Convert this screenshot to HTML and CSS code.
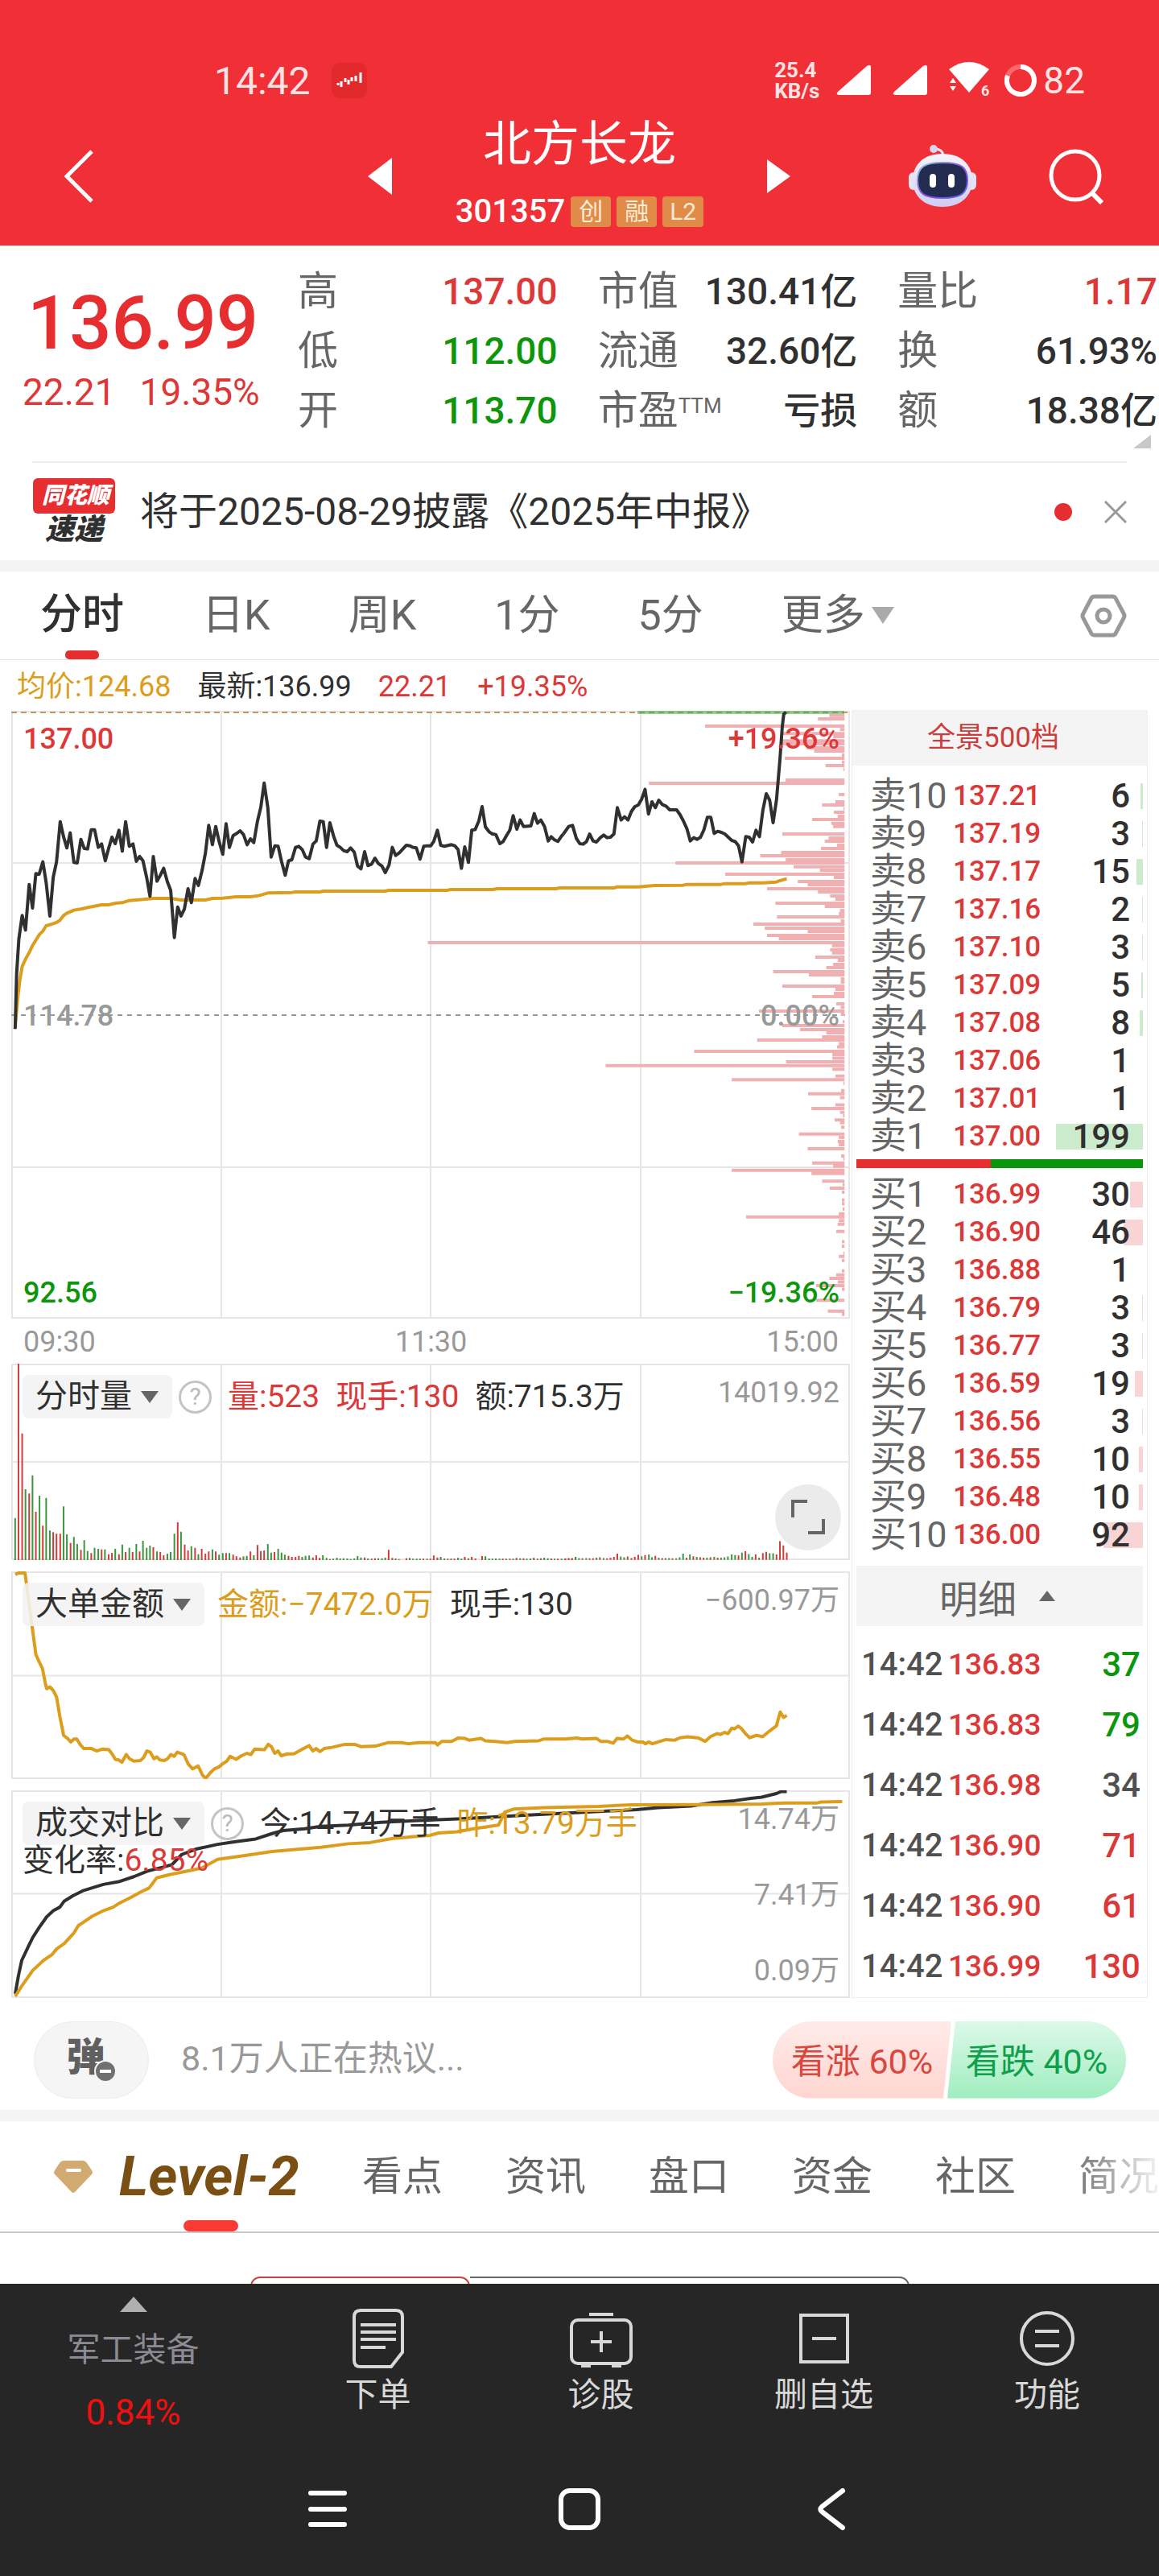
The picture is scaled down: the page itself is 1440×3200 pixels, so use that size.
FILE: index.html
```html
<!DOCTYPE html>
<html lang="zh-CN">
<head>
  <meta charset="utf-8">
  <meta name="viewport" content="width=device-width, initial-scale=1">
  <title>北方长龙 301357</title>
  <link rel="stylesheet" href="styles.css">
</head>
<body>

  <header class="top">
    <div class="status">
      <span class="clock">14:42</span>
      <svg class="app-icon" width="44" height="44" viewBox="0 0 44 44">
        <rect width="44" height="44" rx="10" fill="#e22a2d"/>
        <path d="M8 28v-3M12 30v-7M17 24v-5M21 27v-6M25 23v-5M30 23v-7M36 25V12" stroke="#fff" stroke-width="3"/>
      </svg>
      <span class="speed"><span>25.4</span><span>KB/s</span></span>
      <svg class="signal" width="46" height="40" viewBox="0 0 46 40"><path d="M3 34 39 2q5-3 5 2v31q0 3-3 3H4q-4-1-1-4z" fill="#fff"/></svg>
      <svg class="signal" width="46" height="40" viewBox="0 0 46 40"><path d="M3 34 39 2q5-3 5 2v31q0 3-3 3H4q-4-1-1-4z" fill="#fff"/></svg>
      <svg class="wifi" width="54" height="52" viewBox="0 -2 54 52">
        <path d="M1 10Q26-8 51 10L26 39z" fill="#fff"/>
        <path d="M6 21l4 6H2zM6 37l4-6H2z" fill="#fff"/>
        <text x="41" y="43" class="wifi-six">6</text>
      </svg>
      <svg class="ring" width="40" height="40" viewBox="0 0 40 40">
        <circle cx="20" cy="20" r="17" fill="none" stroke="#f9686c" stroke-width="6"/>
        <path d="M20 3A17 17 0 1 1 4 14" fill="none" stroke="#fff" stroke-width="6"/>
      </svg>
      <span class="battery">82</span>
    </div>

    <div class="titlebar">
      <div class="side left">
        <button class="icon-btn" aria-label="返回">
          <svg width="36" height="66" viewBox="0 0 36 66"><path d="M34 2 3 33l31 31" fill="none" stroke="#fff" stroke-width="5"/></svg>
        </button>
        <button class="icon-btn" aria-label="上一只">
          <svg width="30" height="46" viewBox="0 0 30 46"><path d="M30 0v46L0 23z" fill="#fff"/></svg>
        </button>
      </div>
      <div class="stock">
        <h1>北方长龙</h1>
        <div class="code">301357 <span class="tag">创</span><span class="tag">融</span><span class="tag">L2</span></div>
      </div>
      <div class="side right">
        <button class="icon-btn" aria-label="下一只">
          <svg width="30" height="42" viewBox="0 0 30 42"><path d="M0 0v42l29-21z" fill="#fff"/></svg>
        </button>
        <button class="icon-btn robot" aria-label="助手">
          <svg width="86" height="78" viewBox="0 0 86 78">
            <defs>
              <linearGradient id="shell" x1="0" y1="0" x2="0" y2="1"><stop offset="0" stop-color="#f6f4fb"/><stop offset="1" stop-color="#cfcdf3"/></linearGradient>
              <linearGradient id="rim" x1="0" y1="0" x2="1" y2="1"><stop offset="0" stop-color="#8ad3e0"/><stop offset=".5" stop-color="#8a4fe0"/><stop offset="1" stop-color="#5b62e6"/></linearGradient>
            </defs>
            <path d="M31 5q13-1 13 10" fill="none" stroke="#ece6f6" stroke-width="3"/>
            <circle cx="32" cy="5" r="5" fill="#ddd5ee"/>
            <rect x="1" y="34" width="12" height="22" rx="6" fill="#e6e3f7"/>
            <rect x="73" y="34" width="12" height="22" rx="6" fill="#e6e3f7"/>
            <path d="M43 11c24 0 37 14 37 33 0 20-15 33-37 33S6 64 6 44c0-19 13-33 37-33z" fill="url(#shell)"/>
            <path d="M43 22c22 0 31 5 31 22s-9 22-31 22-31-5-31-22 9-22 31-22z" fill="#222c50" stroke="url(#rim)" stroke-width="2"/>
            <rect x="27" y="36" width="8" height="17" rx="4" fill="#fff"/>
            <rect x="50" y="36" width="8" height="17" rx="4" fill="#fff"/>
          </svg>
        </button>
        <button class="icon-btn search" aria-label="搜索">
          <svg width="70" height="70" viewBox="0 0 70 70" fill="none" stroke="#fff" stroke-width="5"><circle cx="34" cy="34" r="30"/><path d="M56 57l11 11" stroke-width="6"/></svg>
        </button>
      </div>
    </div>
  </header>

  <section class="quote">
    <div class="last">
      <strong class="price">136.99</strong>
      <span class="change"><span>22.21</span><span>19.35%</span></span>
    </div>
    <dl class="stats">
      <div><dt>高</dt><dd class="up">137.00</dd></div>
      <div><dt>市值</dt><dd>130.41亿</dd></div>
      <div><dt>量比</dt><dd class="up">1.17</dd></div>
      <div><dt>低</dt><dd class="down">112.00</dd></div>
      <div><dt>流通</dt><dd>32.60亿</dd></div>
      <div><dt>换</dt><dd>61.93%</dd></div>
      <div><dt>开</dt><dd class="down">113.70</dd></div>
      <div><dt>市盈<sup>TTM</sup></dt><dd>亏损</dd></div>
      <div><dt>额</dt><dd>18.38亿</dd></div>
    </dl>
    <i class="corner"></i>
  </section>

  <section class="news">
    <span class="news-logo"><b>同花顺</b><em>速递</em></span>
    <a class="news-link" href="#">将于2025-08-29披露《2025年中报》</a>
    <i class="dot"></i>
    <button class="icon-btn" aria-label="关闭">
      <svg width="28" height="28" viewBox="0 0 28 28"><path d="M1 1l26 26M27 1 1 27" stroke="#999" stroke-width="3"/></svg>
    </button>
  </section>

  <nav class="periods">
    <button class="period active">分时</button>
    <button class="period">日K</button>
    <button class="period">周K</button>
    <button class="period">1分</button>
    <button class="period">5分</button>
    <button class="period">更多<i class="tri"></i></button>
    <button class="icon-btn settings" aria-label="设置">
      <svg width="58" height="54" viewBox="0 0 58 54" fill="none" stroke="#999" stroke-width="5"><path d="M18 3h22q3 0 4 2l10 19q2 3 0 6L44 49q-1 2-4 2H18q-3 0-4-2L4 30q-2-3 0-6L14 5q1-2 4-2z"/><circle cx="29" cy="27" r="8"/></svg>
    </button>
  </nav>

  <p class="legend">
    <span class="avg">均价:124.68</span>
    <span>最新:136.99</span>
    <span class="up">22.21</span>
    <span class="up">+19.35%</span>
  </p>

  <main class="trade">
    <div class="charts">

      <!-- intraday price -->
      <div class="panel">
        <svg class="plot plot-price" viewBox="0 0 1042 756" preserveAspectRatio="none">
          <path class="grid" d="M1 2H1041V755H1zM261 2V755M521 2V755M782 2V755M1 190H1041M1 568H1041"/>
          <path class="mid" d="M0 379H1036"/>
          <path class="limit" d="M0 3H1042"/>
          <path class="limit-vol" d="M778 3H1035"/>
          <g transform="translate(686 -22) scale(.472 .3333)">
            <path class="profile" d="M740 86H700M740 99H670M740 126H373M740 139H728M740 154H575M740 165H710M740 181H575M740 192H572M740 207H640M740 219H660M740 234H733M740 246H583M740 260H733M740 273H690M740 287H737M740 327H585M740 339H225M740 381H725M740 408H716M740 420H681M740 434H737M740 447H712M740 462H722M740 474H655M740 488H705M740 500H710M740 528H576M740 543H698M740 555H688M740 570H720M740 582H678M740 597H573M740 609H518M740 624H585M740 636H295M740 650H606M740 663H675M740 678H426M740 690H712M740 705H617M740 717H643M740 732H536M740 744H670M740 759H702M740 771H716M740 786H558M740 798H688M740 813H728M740 825H725M740 837H562M740 852H730M740 864H500M740 879H530M740 891H643M740 906H536M740 918H567M740 933H-357M740 944H707M740 959H702M740 971H707M740 987H663M740 999H722M740 1014H710M740 1026H692M740 1041H552M740 1053H646M740 1068H730M740 1080H730M740 1095H576M740 1107H716M740 1122H712M740 1134H655M740 1161H718M740 1174H730M740 1188H515M740 1200H730M740 1228H735M740 1242H576M740 1257H623M740 1269H692M740 1284H681M740 1296H510"/>
          </g>
          <g transform="translate(686 378) scale(.472 .4464)">
            <path class="profile" d="M740 82H725M740 91H720M740 103H344M740 112H708M740 122H708M740 132H586M740 143H111M740 153H708M740 172H716M740 182H443M740 192H737M740 212H731M740 221H644M740 232H728M740 252H716M740 262H653M740 273H728M740 282H736M740 294H714M740 302H728M740 314H731M740 333H620M740 343H725M740 354H722M740 363H725M740 374H643M740 394H731M740 403H737M740 414H655M740 423H710M740 434H443M740 443H653M740 464H681M740 474H735M740 484H701M740 495H733M740 517H733M740 527H733M740 542H735M740 555H725M740 564H481M740 574H725M740 584H722M740 604H718M740 633H733M740 645H733M740 665H737M740 674H725M740 685H733M740 714H733M740 725H718M740 735H700M740 745H722M740 755H665M740 765H733M740 796H665M740 826H696M740 835H733"/>
          </g>
          <g transform="translate(-14 -22) scale(.459 .3333)">
            <polyline class="line gold" points="41,1250 48,1140 54,1070 60,1022 70,992 79,970 88,944 98,922 107,902 116,890 125,870 144,862 153,858 162,850 172,832 180,824 200,812 219,808 238,802 275,792 294,792 313,786 331,784 350,776 387,772 415,768 462,768 490,774 556,774 575,768 603,767 640,762 678,762 700,758 725,748 790,746 800,744 866,744 875,741 1043,741 1052,738 1210,738 1220,735 1335,735 1345,732 1505,732 1515,729 1570,729"/>
            <polyline class="line dark" points="41,1255 45,1050 51,920 60,832 69,886 79,716 88,804 97,676 106,678 116,632 125,710 135,834 144,690 153,632 163,482 172,538 181,580 190,524 200,634 209,636 219,548 228,582 237,584 247,512 256,512 266,578 275,565 285,628 294,582 303,540 312,564 322,514 331,592 340,482 350,574 360,565 369,630 378,612 387,628 397,690 406,760 415,612 425,704 434,682 443,656 453,706 462,738 472,914 481,800 490,834 499,808 509,732 518,784 528,694 537,720 547,664 556,600 565,496 575,568 584,500 593,556 603,604 612,490 621,578 631,534 641,526 650,516 659,530 669,568 678,546 687,560 697,480 706,428 715,338 725,430 734,614 744,572 753,574 762,630 772,682 781,628 790,624 800,578 809,574 818,586 827,614 837,620 847,566 856,554 866,480 875,482 884,578 893,486 903,536 912,570 921,578 930,590 940,594 949,580 959,596 968,648 977,658 987,594 996,646 1006,640 1015,618 1024,638 1034,648 1043,672 1053,644 1062,578 1071,608 1081,598 1100,570 1110,572 1118,578 1127,580 1137,622 1147,574 1156,572 1166,572 1174,556 1184,514 1193,570 1203,574 1222,568 1231,572 1240,586 1249,656 1258,576 1268,634 1277,514 1286,512 1296,480 1305,426 1314,502 1324,520 1333,528 1342,530 1353,564 1362,556 1371,534 1380,514 1389,460 1399,510 1408,476 1417,500 1437,498 1446,452 1455,488 1464,476 1474,500 1484,554 1492,538 1501,550 1510,556 1520,536 1525,528"/>
          </g>
          <g transform="translate(686 -22) scale(.472 .3333)">
            <polyline class="line gold" points="40,729 133,729 142,725 197,725 240,720 315,719 325,716 415,716 425,713 480,713 490,710 525,710 560,707 570,702 588,695"/>
            <polyline class="line dark" points="0,528 14,500 24,496 34,544 43,564 52,566 61,556 69,528 78,554 87,558 97,542 106,532 115,542 124,540 133,528 142,430 152,476 161,464 170,476 179,444 188,426 197,420 206,398 215,362 224,454 233,408 242,430 251,402 260,418 270,424 280,438 298,438 307,456 316,480 325,508 334,554 343,542 352,548 361,540 370,512 379,466 388,466 397,526 406,518 416,522 425,528 434,540 443,552 452,556 461,572 470,632 480,538 489,540 498,558 507,514 516,538 525,440 534,378 543,402 552,486 561,400 570,250 576,130 580,82 586,74"/>
          </g>
        </svg>
        <div class="axis axis-price">
          <div><span class="up">137.00</span><span class="up">+19.36%</span></div>
          <div class="zero"><span>114.78</span><span>0.00%</span></div>
          <div><span class="down">92.56</span><span class="down">−19.36%</span></div>
        </div>
      </div>
      <div class="hours"><span>09:30</span><span>11:30</span><span>15:00</span></div>

      <!-- volume per minute -->
      <div class="panel">
        <svg class="plot plot-volume" viewBox="0 0 1042 244" preserveAspectRatio="none">
          <path class="grid" d="M1 1H1041V243H1zM261 1V243M521 1V243M782 1V243M1 122H1041"/>
          <g transform="translate(-14 -134) scale(.459 .3333)">
            <path class="bar red" d="M50 1134V399M60 1134V662M79 1134V886M97 1134V954M116 1134V1006M144 1134V1030M153 1134V1036M163 1134V1036M191 1134V1070M219 1134V1096M247 1134V1108M275 1134V1094M294 1134V1112M303 1134V1107M322 1134V1112M340 1134V1104M359 1134V1104M378 1134V1102M415 1134V1086M434 1134V1104M443 1134V1116M481 1134V993M500 1134V1076M509 1134V1098M528 1134V1088M546 1134V1092M556 1134V1110M565 1134V1102M584 1134V1102M612 1134V1108M631 1134V1114M640 1134V1120M650 1134V1124M678 1134V1102M697 1134V1078M706 1134V1100M715 1134V1098M743 1134V1104M781 1134V1118M790 1134V1122M800 1134V1122M809 1134V1118M847 1134V1124M856 1134V1116M865 1134V1126M893 1134V1130M987 1134V1124M1006 1134V1129M1015 1134V1127M1052 1134V1096M1062 1134V1126M1080 1134V1130M1100 1134V1127M1146 1134V1129M1165 1134V1129M1174 1134V1117M1184 1134V1124M1212 1134V1129M1230 1134V1129M1258 1134V1122M1277 1134V1122M1287 1134V1128M1305 1134V1119M1361 1134V1129M1380 1134V1129M1398 1134V1126M1417 1134V1127M1445 1134V1125M1464 1134V1127M1492 1134V1128M1510 1134V1129M1530 1134V1129M1548 1134V1129"/>
            <path class="bar green" d="M41 1134V977M69 1134V870M88 1134V818M107 1134V894M125 1134V902M135 1134V1024M172 1134V934M181 1134V1038M200 1134V1048M209 1134V1074M228 1134V1060M237 1134V1100M256 1134V1088M266 1134V1092M284 1134V1094M312 1134V1092M331 1134V1076M350 1134V1088M369 1134V1074M387 1134V1062M397 1134V1088M406 1134V1080M425 1134V1102M453 1134V1110M462 1134V1104M472 1134V1036M490 1134V1028M518 1134V1082M537 1134V1112M575 1134V1094M593 1134V1114M603 1134V1108M621 1134V1108M659 1134V1120M668 1134V1118M687 1134V1116M725 1134V1074M734 1134V1106M753 1134V1092M762 1134V1106M771 1134V1114M818 1134V1122M827 1134V1118M837 1134V1117M874 1134V1116M884 1134V1126M902 1134V1129M912 1134V1125M921 1134V1128M930 1134V1127M940 1134V1128M949 1134V1130M959 1134V1128M968 1134V1119M977 1134V1124M996 1134V1128M1024 1134V1127M1034 1134V1127M1043 1134V1125M1071 1134V1128M1109 1134V1126M1118 1134V1129M1128 1134V1129M1137 1134V1129M1156 1134V1129M1193 1134V1122M1203 1134V1128M1221 1134V1128M1240 1134V1125M1249 1134V1129M1268 1134V1127M1314 1134V1120M1324 1134V1128M1333 1134V1129M1342 1134V1128M1352 1134V1129M1370 1134V1129M1389 1134V1129M1408 1134V1127M1426 1134V1129M1436 1134V1128M1455 1134V1129M1473 1134V1125M1483 1134V1127M1501 1134V1129M1520 1134V1129M1539 1134V1129M1558 1134V1122"/>
          </g>
          <g transform="translate(686 -434) scale(.472 .4464)">
            <path class="bar red" d="M5 1518V1514M14 1518V1513M23 1518V1513M50 1518V1514M69 1518V1514M78 1518V1514M96 1518V1511M115 1518V1514M124 1518V1512M133 1518V1510M142 1518V1501M169 1518V1509M179 1518V1513M188 1518V1510M197 1518V1504M215 1518V1505M242 1518V1507M260 1518V1513M287 1518V1514M324 1518V1512M342 1518V1508M360 1518V1511M369 1518V1512M387 1518V1511M406 1518V1512M461 1518V1506M479 1518V1494M506 1518V1503M525 1518V1499M534 1518V1496M561 1518V1503M570 1518V1466M579 1518V1478M588 1518V1498"/>
            <path class="bar green" d="M32 1518V1510M41 1518V1513M60 1518V1513M87 1518V1512M106 1518V1513M151 1518V1509M160 1518V1511M206 1518V1508M225 1518V1503M233 1518V1511M251 1518V1512M269 1518V1513M278 1518V1513M297 1518V1514M306 1518V1511M315 1518V1501M333 1518V1503M351 1518V1510M378 1518V1512M397 1518V1510M415 1518V1512M424 1518V1511M433 1518V1509M443 1518V1503M452 1518V1505M470 1518V1498M488 1518V1502M497 1518V1510M515 1518V1512M543 1518V1500M552 1518V1500"/>
          </g>
        </svg>
        <div class="readout">
          <select class="chip" aria-label="指标一"><option>分时量</option></select>
          <button class="help" aria-label="说明">?</button>
          <span class="up">量:523</span>
          <span class="up">现手:130</span>
          <span>额:715.3万</span>
        </div>
        <div class="axis"><div><span></span><span>14019.92</span></div></div>
        <button class="expand" aria-label="全屏">
          <svg width="42" height="44" viewBox="0 0 42 44"><path d="M2 22V2h18M40 24v17H21" fill="none" stroke="#666" stroke-width="4"/></svg>
        </button>
      </div>

      <!-- large order amount -->
      <div class="panel gap-top">
        <svg class="plot plot-amount" viewBox="0 0 1042 257" preserveAspectRatio="none">
          <path class="grid" d="M1 1H1041V256H1zM261 1V256M521 1V256M782 1V256M1 129H1041"/>
          <g transform="translate(-14 -22) scale(.676 .37)">
            <polyline class="line gold" points="28,70 34,65 46,65 50,120 58,230 66,338 72,362 78,384 84,440 86,452 92,446 98,458 104,480 110,545 117,608 124,618 130,630 136,620 141,620 148,640 154,652 168,652 178,660 188,654 200,656 206,670 212,688 218,690 224,698 232,672 238,686 246,694 258,692 264,682 270,660 276,664 283,686 288,680 294,690 302,692 308,686 314,672 320,678 326,664 338,672 346,704 354,720 364,710 372,740 378,752 386,734 394,720 402,714 410,702 417,694 423,678 434,688 444,676 454,668 461,672 468,654 486,656 493,638 499,646 505,668 511,660 517,676 528,670 540,670 552,658 568,642 575,660 581,652 588,662 596,652 610,648 634,638 652,638 664,646 690,644 714,632 738,632 750,636 770,632 800,632 804,640 812,628 830,628 842,617 854,618 862,624 884,618 892,626 910,628 932,632 946,628 990,626 1000,620 1040,620 1060,617 1070,620 1096,618 1104,628 1116,628 1127,634 1134,618 1146,620 1153,610 1162,624 1172,630 1182,630 1186,636 1192,630 1199,636 1224,622 1240,624 1250,616 1264,613 1284,617 1296,628 1306,612 1318,602 1324,605 1332,598 1338,602 1345,584 1350,586 1357,577 1363,586 1370,602 1378,616 1390,608 1402,612 1414,594 1427,576 1434,530 1440,548 1446,541"/>
          </g>
        </svg>
        <div class="readout">
          <select class="chip" aria-label="指标二"><option>大单金额</option></select>
          <span class="avg">金额:−7472.0万</span>
          <span>现手:130</span>
        </div>
        <div class="axis"><div><span></span><span>−600.97万</span></div></div>
      </div>

      <!-- turnover compared with yesterday -->
      <div class="panel gap-top">
        <svg class="plot plot-compare" viewBox="0 0 1042 257" preserveAspectRatio="none">
          <path class="grid" d="M1 1H1041V256H1zM261 1V256M521 1V256M782 1V256M1 128H1041"/>
          <g transform="translate(-14 -295) scale(.676 .37)">
            <polyline class="line dark" points="28,1478 34,1416 40,1366 52,1320 60,1290 72,1256 86,1220 98,1200 110,1188 118,1168 134,1150 154,1132 190,1112 220,1102 246,1086 270,1068 300,1054 316,1046 334,1012 360,994 400,978 436,968 470,960 500,942 520,932 560,926 590,918 640,914 700,904 850,892 970,880 1170,862 1210,855 1270,850 1310,838 1350,832 1380,824 1400,820 1427,808 1436,801 1446,801"/>
            <polyline class="line gold" points="28,1486 40,1452 60,1400 80,1366 96,1346 104,1328 118,1310 136,1274 144,1250 170,1218 190,1200 208,1188 220,1174 240,1156 258,1138 274,1124 288,1090 310,1080 370,1058 400,1028 440,1018 500,1002 590,988 640,976 680,972 722,958 790,948 806,940 840,936 870,926 916,914 928,870 944,860 1000,855 1100,851 1160,846 1280,845 1400,843 1440,840 1500,840 1510,836 1548,835"/>
          </g>
        </svg>
        <div class="readout">
          <select class="chip" aria-label="指标三"><option>成交对比</option></select>
          <button class="help" aria-label="说明">?</button>
          <span>今:14.74万手</span>
          <span class="avg">昨:13.79万手</span>
          <span class="rate">变化率:<span class="up">6.85%</span></span>
        </div>
        <div class="axis axis-compare">
          <div><span></span><span>14.74万</span></div>
          <div><span></span><span>7.41万</span></div>
          <div><span></span><span>0.09万</span></div>
        </div>
      </div>
    </div>

    <aside class="book">
      <a class="book-head" href="#">全景500档</a>
      <table class="orders asks">
        <tr><th>卖10</th><td>137.21</td><td class="qty" style="--depth:3px">6</td></tr>
        <tr><th>卖9</th><td>137.19</td><td class="qty" style="--depth:1px">3</td></tr>
        <tr><th>卖8</th><td>137.17</td><td class="qty" style="--depth:8px">15</td></tr>
        <tr><th>卖7</th><td>137.16</td><td class="qty" style="--depth:1px">2</td></tr>
        <tr><th>卖6</th><td>137.10</td><td class="qty" style="--depth:1px">3</td></tr>
        <tr><th>卖5</th><td>137.09</td><td class="qty" style="--depth:2px">5</td></tr>
        <tr><th>卖4</th><td>137.08</td><td class="qty" style="--depth:4px">8</td></tr>
        <tr><th>卖3</th><td>137.06</td><td class="qty" style="--depth:0px">1</td></tr>
        <tr><th>卖2</th><td>137.01</td><td class="qty" style="--depth:0px">1</td></tr>
        <tr><th>卖1</th><td>137.00</td><td class="qty" style="--depth:108px">199</td></tr>
      </table>
      <div class="ratio"><i style="width:47%"></i></div>
      <table class="orders bids">
        <tr><th>买1</th><td>136.99</td><td class="qty" style="--depth:16px">30</td></tr>
        <tr><th>买2</th><td>136.90</td><td class="qty" style="--depth:24px">46</td></tr>
        <tr><th>买3</th><td>136.88</td><td class="qty" style="--depth:0px">1</td></tr>
        <tr><th>买4</th><td>136.79</td><td class="qty" style="--depth:1px">3</td></tr>
        <tr><th>买5</th><td>136.77</td><td class="qty" style="--depth:1px">3</td></tr>
        <tr><th>买6</th><td>136.59</td><td class="qty" style="--depth:10px">19</td></tr>
        <tr><th>买7</th><td>136.56</td><td class="qty" style="--depth:1px">3</td></tr>
        <tr><th>买8</th><td>136.55</td><td class="qty" style="--depth:5px">10</td></tr>
        <tr><th>买9</th><td>136.48</td><td class="qty" style="--depth:5px">10</td></tr>
        <tr><th>买10</th><td>136.00</td><td class="qty" style="--depth:49px">92</td></tr>
      </table>
      <button class="detail">明细<i class="tri-up"></i></button>
      <table class="ticks">
        <tr><th>14:42</th><td>136.83</td><td class="qty down">37</td></tr>
        <tr><th>14:42</th><td>136.83</td><td class="qty down">79</td></tr>
        <tr><th>14:42</th><td>136.98</td><td class="qty flat">34</td></tr>
        <tr><th>14:42</th><td>136.90</td><td class="qty up">71</td></tr>
        <tr><th>14:42</th><td>136.90</td><td class="qty up">61</td></tr>
        <tr><th>14:42</th><td>136.99</td><td class="qty up">130</td></tr>
      </table>
    </aside>
  </main>

  <section class="talk">
    <button class="danmu" aria-label="关闭弹幕">弹<svg width="28" height="28" viewBox="0 0 28 28"><circle cx="14" cy="14" r="13" fill="#707070" stroke="#f5f5f5" stroke-width="2"/><path d="M7 14h14" stroke="#fff" stroke-width="4"/></svg></button>
    <a class="talk-link" href="#">8.1万人正在热议...</a>
    <div class="vote">
      <button class="bull">看涨 60%</button>
      <button class="bear">看跌 40%</button>
    </div>
  </section>

  <nav class="sections">
    <a class="level2" href="#">
      <svg width="50" height="42" viewBox="0 0 50 42"><path d="M13 1h24q3 0 5 3l6 9q2 3 0 5L27 40q-2 2-4 0L2 18q-2-2 0-5l6-9q2-3 5-3z" fill="#d2ab72"/><path d="M18 13h15" stroke="#fff" stroke-width="4" stroke-linecap="round"/></svg>
      Level-2
    </a>
    <a href="#">看点</a>
    <a href="#">资讯</a>
    <a href="#">盘口</a>
    <a href="#">资金</a>
    <a href="#">社区</a>
    <a href="#">简况</a>
  </nav>
  <div class="segments"><i class="seg on"></i><i class="seg"></i></div>

  <footer class="dock">
    <nav class="actions">
      <a class="industry" href="#"><i></i><span>军工装备</span><b>0.84%</b></a>
      <a href="#">
        <svg width="80" height="80" viewBox="0 0 80 80"><path d="M18 6h44q8 0 8 8v44L56 76H18q-8 0-8-8V14q0-8 8-8z"/><path d="M18 24h44M18 33h44M18 42h44M18 52h31"/></svg>
        下单
      </a>
      <a href="#">
        <svg width="80" height="80" viewBox="0 0 80 80"><rect x="3" y="18" width="74" height="54" rx="8"/><path d="M25 11h30M40 32v26M27 45h26M15 75h12M53 75h12"/></svg>
        诊股
      </a>
      <a href="#">
        <svg width="80" height="80" viewBox="0 0 80 80"><rect x="11" y="12" width="58" height="58"/><path d="M25 41h30"/></svg>
        删自选
      </a>
      <a href="#">
        <svg width="80" height="80" viewBox="0 0 80 80"><circle cx="40" cy="41" r="32"/><path d="M25 32h30M25 50h30"/></svg>
        功能
      </a>
    </nav>
    <div class="system">
      <button class="icon-btn" aria-label="菜单"><svg width="54" height="54" viewBox="0 0 54 54" fill="none" stroke="#fff" stroke-width="6" stroke-linecap="round"><path d="M6 7h42M6 27h42M6 46h42"/></svg></button>
      <button class="icon-btn" aria-label="主页"><svg width="54" height="54" viewBox="0 0 54 54" fill="none" stroke="#fff" stroke-width="6"><rect x="4" y="4" width="46" height="46" rx="11"/></svg></button>
      <button class="icon-btn" aria-label="返回上级"><svg width="54" height="54" viewBox="0 0 54 54" fill="none" stroke="#fff" stroke-width="6" stroke-linecap="round"><path d="M41 4 15 24q-3 3 0 6l26 20"/></svg></button>
    </div>
  </footer>

</body>
</html>
```
FILE: styles.css
```css
* {
  box-sizing: border-box;
}

body {
  margin: 0;
  font-family: Roboto, "Noto Sans CJK SC", sans-serif;
  font-size: 36px;
  color: #303030;
  background-color: #fff;
}

a {
  color: inherit;
  text-decoration: none;
}

button {
  font-family: inherit;
  color: inherit;
  border: none;
  padding: 0;
  background: none;
  cursor: pointer;
}

svg {
  display: block;
}

.icon-btn {
  line-height: 0;
}

.up {
  color: #dc3838;
}

.down {
  color: #0c960c;
}

.flat {
  color: #505050;
}

.avg {
  color: #dd9d1c;
}

/* header */

.top {
  background-color: #f12f37;
  color: #fff;
  height: 305px;
  padding-top: 60px;
}

.status {
  display: flex;
  align-items: center;
  height: 80px;
  padding: 0 92px 0 266px;
  color: #ffe3e4;
}

.clock {
  font-size: 48px;
}

.app-icon {
  margin-left: 26px;
}

.speed {
  display: flex;
  flex-direction: column;
  margin-left: auto;
  margin-right: 20px;
  font-size: 26px;
  line-height: 26px;
  font-weight: bold;
}

.signal {
  margin-right: 24px;
}

.wifi-six {
  font-size: 18px;
  font-weight: bold;
  fill: #ffe3e4;
}

.ring {
  margin-left: 16px;
  margin-right: 8px;
}

.battery {
  font-size: 46px;
}

.titlebar {
  display: grid;
  grid-template-columns: 1fr 466px 1fr;
}

.side {
  display: flex;
  align-items: center;
  padding-top: 16px;
}

.left {
  justify-content: space-between;
  padding-left: 80px;
}

.right {
  padding-right: 68px;
}

.robot {
  margin-left: auto;
}

.search {
  margin-left: 88px;
}

.stock {
  padding-top: 2px;
  text-align: center;
}

.stock h1 {
  margin: 0;
  font-size: 60px;
  line-height: 76px;
  font-weight: normal;
}

.code {
  display: flex;
  justify-content: center;
  align-items: center;
  gap: 7px;
  margin-top: 26px;
  font-size: 40px;
  line-height: 38px;
  font-weight: 500;
}

.tag {
  min-width: 50px;
  padding: 0 9px;
  font-size: 30px;
  font-weight: normal;
  color: #fdebd6;
  background-color: #e08c48;
  border-radius: 4px;
}

/* quote */

.quote {
  position: relative;
  display: grid;
  grid-template-columns: 342fr 1068fr;
  height: 268px;
  padding: 20px 2px 0 28px;
}

.last {
  display: flex;
  flex-direction: column;
  padding-right: 14px;
}

.price {
  padding-top: 28px;
  font-size: 92px;
  line-height: 98px;
  font-weight: 500;
  color: #e62e31;
  padding-left: 6px;
}

.change {
  display: flex;
  gap: 30px;
  padding-top: 12px;
  font-size: 46px;
  line-height: 48px;
  color: #dc3838;
}

.stats {
  display: grid;
  grid-template-columns: repeat(3, 1fr);
  column-gap: 50px;
  grid-auto-rows: 74px;
  margin: 0;
  font-size: 46px;
  line-height: 74px;
}

.stats div {
  display: flex;
  justify-content: space-between;
  white-space: nowrap;
}

.stats dt {
  font-size: 50px;
  color: #666;
}

.stats dd {
  margin: 0;
  font-weight: 500;
}

.stats sup {
  font-size: 26px;
  line-height: 26px;
  vertical-align: 14px;
}

.corner {
  position: absolute;
  right: 10px;
  bottom: 16px;
  border-left: 22px solid transparent;
  border-bottom: 17px solid #c8c8c8;
}

/* news */

.news {
  display: flex;
  align-items: center;
  height: 123px;
  margin: 0 40px;
  border-top: 2px solid #eee;
}

.news-logo {
  display: flex;
  flex-direction: column;
  align-items: center;
  width: 104px;
  font-style: italic;
  font-weight: 900;
}

.news-logo b {
  width: 102px;
  padding-left: 4px;
  font-size: 28px;
  line-height: 44px;
  text-align: center;
  color: #fff;
  background-color: #e62e31;
  border-radius: 6px;
}

.news-logo em {
  font-size: 36px;
  line-height: 40px;
}

.news-link {
  margin-left: 30px;
  font-size: 48px;
  line-height: 60px;
}

.dot {
  width: 22px;
  height: 22px;
  margin-left: auto;
  margin-right: 40px;
  border-radius: 50%;
  background-color: #e62e31;
}

/* chart period tabs */

.periods {
  display: flex;
  gap: 97px;
  height: 124px;
  padding: 0 40px 0 50px;
  border-top: 14px solid #f4f4f4;
  border-bottom: 1px solid #e0e0e0;
}

.period {
  font-size: 52px;
  line-height: 108px;
  color: #666;
  display: flex;
  align-items: center;
}

.period.active {
  flex-direction: column;
  color: #303030;
  font-weight: 500;
}

.period.active::after {
  content: "";
  width: 42px;
  height: 11px;
  margin-top: -10px;
  border-radius: 5px;
  background-color: #e62e31;
  flex-shrink: 0;
}

.tri {
  margin-left: 8px;
  border: 14px solid transparent;
  border-top: 21px solid #aaa;
  border-bottom: none;
}

.settings {
  margin-left: auto;
}

.legend {
  display: flex;
  gap: 33px;
  margin: 0;
  padding: 4px 0 0 21px;
  font-size: 36px;
  line-height: 58px;
  height: 62px;
}

/* charts, each panel stacks its texts over the plot */

.trade {
  display: grid;
  grid-template-columns: 1042fr 368fr;
  gap: 2px;
  padding: 0 14px;
}

.panel {
  display: grid;
  grid-template-columns: 100%;
}

.panel > * {
  grid-area: 1 / 1;
}

.gap-top {
  margin-top: 14px;
}

.plot {
  width: 100%;
}

.plot-price {
  height: 756px;
}

.plot-volume {
  height: 244px;
}

.plot-amount,
.plot-compare {
  height: 258px;
}

.plot * {
  vector-effect: non-scaling-stroke;
  fill: none;
}

.grid {
  stroke: #e6e6e6;
  stroke-width: 2px;
}

.mid {
  stroke: #999;
  stroke-width: 2px;
  stroke-dasharray: 6 6;
}

.limit {
  stroke: #c09a60;
  stroke-width: 2px;
  stroke-dasharray: 7 5;
}

.limit-vol {
  stroke: #4caf50;
  stroke-opacity: 0.6;
  stroke-width: 4px;
}

.profile {
  stroke: #f0b0b2;
  stroke-width: 4px;
}

.line {
  stroke-width: 4px;
  stroke-linejoin: round;
}

.dark {
  stroke: #303030;
}

.gold {
  stroke: #dd9d1c;
}

.bar {
  stroke-width: 2px;
}

.bar.red {
  stroke: #d23c3c;
}

.bar.green {
  stroke: #3c963c;
}

.axis {
  display: flex;
  flex-direction: column;
  padding: 12px 13px 0 15px;
  font-size: 36px;
  line-height: 48px;
  color: #999;
  pointer-events: none;
}

.axis div {
  display: flex;
  justify-content: space-between;
}

.axis-price {
  justify-content: space-between;
  padding-bottom: 8px;
  font-weight: 500;
}

.axis-compare {
  justify-content: space-between;
  padding-bottom: 10px;
}

.hours {
  display: flex;
  justify-content: space-between;
  padding: 2px 14px 0 15px;
  font-size: 36px;
  line-height: 54px;
  color: #999;
}

.readout {
  display: flex;
  flex-wrap: wrap;
  align-content: flex-start;
  align-items: center;
  column-gap: 20px;
  padding: 14px 100px 0 14px;
  font-size: 39px;
  line-height: 54px;
}

.chip {
  appearance: none;
  height: 54px;
  margin: 0 -4px 0 0;
  padding: 0 50px 0 16px;
  border: none;
  border-radius: 8px;
  font-family: inherit;
  font-size: 40px;
  line-height: 54px;
  color: #303030;
  background: #f2f2f2e0 url("data:image/svg+xml,%3Csvg xmlns='http://www.w3.org/2000/svg' width='22' height='15'%3E%3Cpath d='M0 0h22L11 15z' fill='%23666'/%3E%3C/svg%3E") no-repeat right 17px center;
}

.help {
  width: 41px;
  height: 41px;
  margin-left: -8px;
  border: 3px solid #c4c4c4;
  border-radius: 50%;
  font-size: 30px;
  line-height: 34px;
  color: #bbb;
}

.readout .rate {
  flex-basis: 100%;
  line-height: 38px;
}

.expand {
  place-self: end;
  display: grid;
  place-items: center;
  width: 82px;
  height: 82px;
  margin: 0 11px 12px 0;
  border-radius: 50%;
  background-color: #ebebeb;
}

/* order book */

.book {
  padding: 0 5px;
  border: 1px solid #eee;
}

.book-head {
  display: block;
  margin: 0 -5px;
  padding-right: 16px;
  font-size: 35px;
  line-height: 68px;
  text-align: center;
  color: #cc3c3c;
  background-color: #f4f4f4;
}

.orders,
.ticks {
  width: 100%;
  border-collapse: collapse;
  table-layout: fixed;
}

.orders {
  margin-top: 14px;
}

.orders th,
.ticks th {
  width: 120px;
  padding: 0 0 0 17px;
  text-align: left;
  font-weight: normal;
  white-space: nowrap;
}

.orders th {
  font-size: 45px;
  line-height: 47px;
  color: #666;
}

.orders td,
.ticks td {
  padding: 0;
  font-size: 35px;
  line-height: 47px;
  font-weight: 500;
  color: #dc3838;
}

.orders .qty {
  padding-right: 16px;
  text-align: right;
  font-size: 42px;
  color: #303030;
  background: linear-gradient(#cceacc, #cceacc) no-repeat right center / var(--depth) 32px;
}

.bids .qty {
  background-image: linear-gradient(#f9d4d4, #f9d4d4);
}

.ratio {
  height: 11px;
  margin-top: 5px;
  background-color: #0a960a;
}

.ratio i {
  display: block;
  height: 11px;
  background-color: #e62e31;
}

.orders.bids {
  margin-top: 9px;
}

.detail {
  display: flex;
  justify-content: center;
  align-items: center;
  width: 100%;
  height: 75px;
  margin-top: 15px;
  margin-bottom: 10px;
  padding-right: 6px;
  font-size: 48px;
  color: #666;
  background-color: #f4f4f4;
}

.tri-up {
  margin-left: 28px;
  border: 10px solid transparent;
  border-bottom: 13px solid #666;
  border-top: none;
}

.ticks th {
  width: 114px;
  padding-left: 6px;
  font-size: 40px;
  line-height: 75px;
  font-weight: 500;
  color: #505050;
}

.ticks td {
  font-size: 37px;
  line-height: 75px;
}

.ticks .qty {
  padding-right: 3px;
  text-align: right;
  font-size: 42px;
}

.ticks .down {
  color: #0c960c;
}

.ticks .flat {
  color: #505050;
}

/* comments bar */

.talk {
  display: flex;
  align-items: center;
  height: 153px;
  padding: 14px 41px 0 42px;
  border-bottom: 14px solid #f4f4f4;
}

.danmu {
  display: flex;
  align-items: center;
  justify-content: center;
  width: 143px;
  height: 96px;
  border: 1px solid #ececec;
  border-radius: 48px;
  font-size: 48px;
  line-height: 60px;
  font-weight: 900;
  color: #606060;
  background-color: #f5f5f5;
  padding-bottom: 6px;
}

.danmu svg {
  margin: 34px 0 0 -14px;
}

.talk-link {
  margin-left: 40px;
  font-size: 43px;
  line-height: 60px;
  padding-bottom: 4px;
  color: #999;
}

.vote {
  display: flex;
  margin-left: auto;
  border-radius: 48px;
  overflow: hidden;
}

.vote button {
  width: 222px;
  height: 96px;
  padding-bottom: 4px;
  font-size: 43px;
}

.bull {
  color: #d9483e;
  background: linear-gradient(#ffebe9, #ffd5d0);
  clip-path: polygon(0 0, 100% 0, 212px 100%, 0 100%);
}

.bear {
  margin-left: -5px;
  color: #10a04c;
  background: linear-gradient(#dcf9e8, #a0edc0);
  clip-path: polygon(10px 0, 100% 0, 100% 100%, 0 100%);
}

/* section tabs */

.sections {
  display: flex;
  gap: 78px;
  height: 139px;
  padding-left: 66px;
  overflow: hidden;
  white-space: nowrap;
  font-size: 50px;
  line-height: 138px;
  color: #666;
  border-bottom: 2px solid #c8c8c8;
}

.sections a:last-child {
  color: transparent;
  background: linear-gradient(90deg, #777, #eee 95%);
  background-clip: text;
}

.sections .level2 {
  position: relative;
  display: flex;
  align-items: center;
  gap: 32px;
  font-size: 69px;
  font-weight: bold;
  font-style: italic;
  color: #7a4f14;
}

.level2::after {
  content: "";
  position: absolute;
  bottom: 0;
  left: 162px;
  width: 68px;
  height: 14px;
  border-radius: 7px;
  background-color: #fa3a34;
}

.segments {
  display: flex;
  height: 63px;
  padding: 54px 310px 0 311px;
  overflow: hidden;
}

.seg {
  flex: 547;
  height: 60px;
  border: 2px solid #666;
  border-left: none;
  border-radius: 0 12px 0 0;
}

.seg.on {
  flex: 271;
  border: 2px solid #c84040;
  border-radius: 12px 12px 0 0;
}

/* bottom bars */

.dock {
  background-color: #262626;
  color: #d8d8d8;
}

.actions {
  display: grid;
  grid-template-columns: 331fr 277fr 277fr 277fr 278fr;
  height: 197px;
}

.actions a {
  display: flex;
  flex-direction: column;
  align-items: center;
  padding-top: 27px;
  font-size: 41px;
  line-height: 62px;
}

.actions svg {
  fill: none;
  stroke: #d8d8d8;
  stroke-width: 4px;
}

.actions .industry {
  padding-top: 16px;
  color: #8c8a92;
}

.industry i {
  border: 17px solid transparent;
  border-bottom: 19px solid #b0b0b0;
  border-top: none;
}

.industry span {
  margin-top: 16px;
}

.industry b {
  margin-top: 16px;
  font-size: 44px;
  font-weight: normal;
  color: #f01010;
}

.system {
  display: flex;
  justify-content: center;
  align-items: center;
  gap: 259px;
  height: 166px;
}
```
